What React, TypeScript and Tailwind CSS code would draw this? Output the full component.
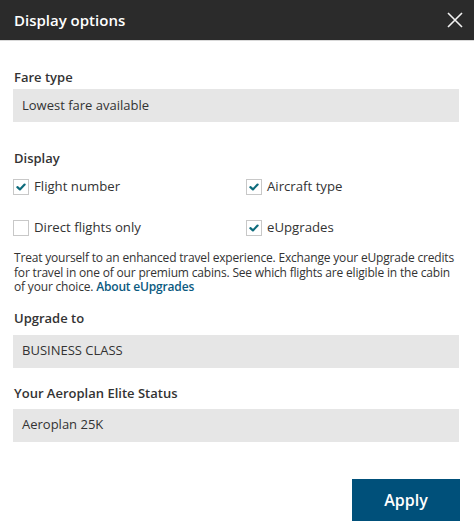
import React from "react";

function Check({ checked }: { checked: boolean }) {
  return (
    <span className="w-[16px] h-[16px] border border-[#c8c8c8] bg-white flex items-center justify-center shrink-0">
      {checked && (
        <svg width="10" height="8" viewBox="0 0 10 8">
          <path d="M1.4 4.2 L3.9 6.4 L8.6 1.6" stroke="#0d6b7c" strokeWidth="2.2" fill="none" strokeLinecap="round" strokeLinejoin="round" />
        </svg>
      )}
    </span>
  );
}

function CheckItem({ checked, label }: { checked: boolean; label: string }) {
  return (
    <div className="flex items-center h-[20px]">
      <Check checked={checked} />
      <span className="ml-[5px] text-[13.2px] text-[#333]">{label}</span>
    </div>
  );
}

export default function App() {
  return (
    <div
      className="w-[474px] h-[532px] bg-white flex flex-col"
      style={{ fontFamily: '"Open Sans", "Noto Sans", sans-serif' }}
    >
      <div className="h-[40px] bg-[#2b2b2b] flex items-center justify-between pl-[14px] pr-[11px] border-b border-[#d9d9d9] box-content">
        <span className="text-white text-[15px] font-semibold">Display options</span>
        <svg width="16" height="16" viewBox="0 0 16 16">
          <path d="M1 1 L15 15 M15 1 L1 15" stroke="#f2f2f2" strokeWidth="1.6" />
        </svg>
      </div>
      <div className="flex flex-col px-[13px] pt-[26px]">
        <div className="text-[13px] leading-[20px] font-semibold text-[#333] pl-[1px]">Fare type</div>
        <div className="mt-[2px] h-[33px] w-[446px] bg-[#e6e6e6] flex items-center pl-[9px] text-[13px] text-[#333]">
          Lowest fare available
        </div>
        <div className="mt-[26px] text-[13px] leading-[20px] font-semibold text-[#333] pl-[1px]">Display</div>
        <div className="mt-[9px] grid grid-cols-[233px_1fr] gap-y-[21px]">
          <CheckItem checked label="Flight number" />
          <CheckItem checked label="Aircraft type" />
          <CheckItem checked={false} label="Direct flights only" />
          <CheckItem checked label="eUpgrades" />
        </div>
        <p className="mt-[13px] text-[12px] leading-[14.5px] tracking-[-0.18px] text-[#333] pl-[1px]">
          Treat yourself to an enhanced travel experience. Exchange your eUpgrade credits for travel in one of our premium cabins. See which flights are eligible in the cabin of your choice.{" "}
          <span className="font-semibold text-[#0b5a80]">About eUpgrades</span>
        </p>
        <div className="mt-[13px] text-[13px] leading-[20px] font-semibold text-[#333] pl-[1px]">Upgrade to</div>
        <div className="mt-[7px] h-[33px] w-[446px] bg-[#e6e6e6] flex items-center pl-[9px] text-[13px] text-[#333]">
          BUSINESS CLASS
        </div>
        <div className="mt-[15px] text-[13px] leading-[20px] font-semibold text-[#333] pl-[1px]">Your Aeroplan Elite Status</div>
        <div className="mt-[6px] h-[33px] w-[446px] bg-[#e6e6e6] flex items-center pl-[9px] text-[13px] text-[#333]">
          Aeroplan 25K
        </div>
        <div className="mt-[37px] flex justify-end pr-[1px]">
          <button className="w-[108px] h-[42px] bg-[#00507a] text-white text-[16px] font-semibold">Apply</button>
        </div>
      </div>
    </div>
  );
}
